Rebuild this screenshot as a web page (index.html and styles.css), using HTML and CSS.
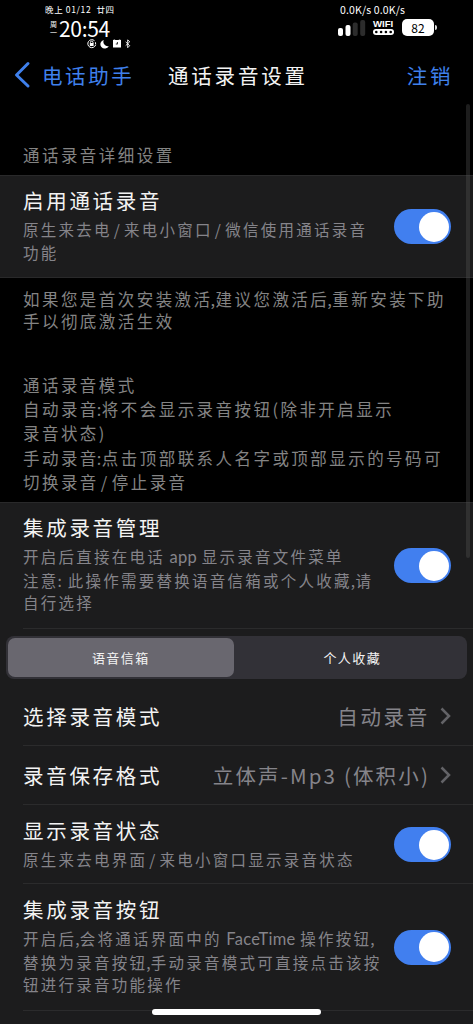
FILE: index.html
```html
<!DOCTYPE html>
<html lang="zh-CN">
<head>
<meta charset="utf-8">
<title>通话录音设置</title>
<link rel="stylesheet" href="styles.css">
</head>
<body>
<main class="screen">
  <header class="status">
    <div class="status-left">
      <div class="date">晚上 01/12&nbsp; 廿四</div>
      <div class="clock-row"><span class="week"><span>周</span><span>一</span></span><span class="clock">20:54</span></div>
      <svg class="status-icons" width="44" height="10" viewBox="0 0 44 10">
        <g fill="none" stroke="#fff" stroke-width="1"><path d="M7.5 1.7A4 4 0 1 0 8.6 6M8.4 3.2l.3 2.3"/><path d="M3.4 4.2V3.4a1.3 1.3 0 0 1 2.6 0v.8"/></g>
        <rect x="2.8" y="4" width="3.8" height="3" rx=".5" fill="#fff"/>
        <path d="M16.8.9a4.4 4.4 0 1 0 5 6.1A4.4 4.4 0 0 1 16.8.9Z" fill="#fff"/>
        <path d="M26 1.1 27.6.4 28.5 1h3l.9-.6L34 1.1v7.4H26Z" fill="#fff"/><path d="M30.4 5.2V3M30.4 5H28.8" stroke="#000" stroke-width=".8" fill="none"/>
        <path d="m38.7 2.9 4 3.8-2 2V.8l2 2-4 3.8" fill="none" stroke="#fff" stroke-width=".9"/>
      </svg>
    </div>
    <div class="status-right">
      <div class="speed">0.0K/s 0.0K/s</div>
      <div class="signals">
        <svg width="28" height="16" viewBox="0 0 28 16"><g fill="#fff"><rect x="0" y="8" width="5" height="8" rx="2"/><rect x="7.5" y="5" width="5" height="11" rx="2"/></g><g fill="#2c2c2c"><rect x="14.7" y="2.5" width="5" height="13.5" rx="2"/><rect x="22.2" y="0" width="5" height="16" rx="2"/></g></svg>
        <div class="wifi"><span>WIFI</span><svg width="21" height="6" viewBox="0 0 21 6"><rect width="21" height="6" rx="3" fill="#fff"/><g fill="#000"><circle cx="3.3" cy="3" r="1.3"/><circle cx="8.1" cy="3" r="1.3"/><circle cx="12.9" cy="3" r="1.3"/><circle cx="17.7" cy="3" r="1.3"/></g></svg></div>
        <div class="battery"><span class="level">82</span><span class="tip"></span></div>
      </div>
    </div>
  </header>

  <nav class="nav">
    <a class="back"><svg width="17" height="28" viewBox="0 0 17 28"><path d="M14 2.5 2.5 14 14 25" fill="none" stroke="#3f80ec" stroke-width="3" stroke-linecap="round" stroke-linejoin="round"/></svg><span>电话助手</span></a>
    <h1>通话录音设置</h1>
    <a class="logout">注销</a>
  </nav>

  <p class="note note-head"><span>通话录音详细设置</span></p>

  <section class="group first">
    <div class="row">
      <div class="copy"><h2>启用通话录音</h2><p><span>原生来去电<i>/</i>来电小窗口<i>/</i>微信使用通话录音</span><span>功能</span></p></div>
      <div class="toggle"></div>
    </div>
  </section>

  <p class="note note-foot"><span>如果您是首次安装激活<em>,</em>建议您激活后<em>,</em>重新安装下助</span><span>手以彻底激活生效</span></p>
  <p class="note note-mode"><span>通话录音模式</span><span>自动录音<em>:</em>将不会显示录音按钮(除非开启显示</span><span>录音状态)</span><span>手动录音<em>:</em>点击顶部联系人名字或顶部显示的号码可</span><span>切换录音<i>/</i>停止录音</span></p>

  <section class="group second">
    <div class="row manage">
      <div class="copy"><h2>集成录音管理</h2><p><span>开启后直接在电话<b> app </b>显示录音文件菜单</span><span>注意<em>:</em> 此操作需要替换语音信箱或个人收藏<em>,</em>请</span><span>自行选择</span></p></div>
      <div class="toggle"></div>
    </div>
    <div class="segment-wrap"><div class="segment"><span class="active">语音信箱</span><span>个人收藏</span></div></div>
    <div class="row link"><h2>选择录音模式</h2><span class="value">自动录音</span><svg class="chevron" width="11" height="18" viewBox="0 0 11 18"><path d="m1.5 1.5 7.5 7.5-7.5 7.5" fill="none" stroke="#636367" stroke-width="2.5"/></svg></div>
    <div class="row link"><h2>录音保存格式</h2><span class="value mixed">立体声-Mp3 (体积小)</span><svg class="chevron" width="11" height="18" viewBox="0 0 11 18"><path d="m1.5 1.5 7.5 7.5-7.5 7.5" fill="none" stroke="#636367" stroke-width="2.5"/></svg></div>
    <div class="row state">
      <div class="copy"><h2>显示录音状态</h2><p><span>原生来去电界面<i>/</i>来电小窗口显示录音状态</span></p></div>
      <div class="toggle"></div>
    </div>
    <div class="row button-row">
      <div class="copy"><h2>集成录音按钮</h2><p><span>开启后<em>,</em>会将通话界面中的<b> FaceTime </b>操作按钮<em>,</em></span><span>替换为录音按钮<em>,</em>手动录音模式可直接点击该按</span><span>钮进行录音功能操作</span></p></div>
      <div class="toggle"></div>
    </div>
  </section>
  <div class="scrollbar"></div>
  <div class="home"></div>
</main>
</body>
</html>
```

FILE: styles.css
```css
* { box-sizing: border-box; }
body { margin: 0; background: #000; }
.screen { position: relative; width: 473px; height: 1024px; overflow: hidden; background: #000; color: #f3f3f3; font-family: "Noto Sans CJK SC", sans-serif; font-weight: 400; }
h1, h2, p { margin: 0; font-weight: 400; }
i, em, b { font-style: normal; font-weight: inherit; }

.status { display: flex; justify-content: space-between; height: 50px; color: #fff; }
.status-left { padding: 3px 0 0 45px; }
.date { font-size: 8.5px; line-height: 12px; letter-spacing: .65px; white-space: nowrap; }
.clock-row { display: flex; align-items: center; height: 24px; margin-top: 1px; padding-left: 5px; }
.week { display: flex; flex-direction: column; width: 9px; font-size: 7px; line-height: 8px; }
.clock { font-size: 21px; line-height: 24px; letter-spacing: -.3px; }
.status-icons { display: block; margin: -1px 0 0 42px; }
.status-right { width: 133px; padding-top: 4px; }
.speed { font-size: 10.5px; line-height: 12px; letter-spacing: .15px; white-space: nowrap; }
.signals { display: flex; align-items: flex-start; padding-top: 3px; }
.signals > svg { margin-top: 1px; margin-left: -2px; }
.wifi { display: flex; flex-direction: column; width: 21px; margin-left: 7px; }
.wifi span { height: 10px; font: bold 9.6px/10px "Liberation Sans", sans-serif; white-space: nowrap; }
.battery { display: flex; align-items: center; margin-left: 8px; }
.level { width: 32px; height: 17px; border-radius: 5px; background: #fff; color: #000; font-size: 12px; line-height: 17px; text-align: center; }
.tip { width: 2px; height: 5px; margin-left: 1px; border-radius: 0 2px 2px 0; background: #ddd; }

.nav { display: grid; grid-template-columns: 168px 1fr auto; align-items: center; height: 50px; padding-right: 20px; font-size: 20.5px; line-height: 30px; letter-spacing: 2.6px; }
.nav h1 { font-size: 20.5px; letter-spacing: 2.8px; }
.back, .logout { color: #3f80ec; }
.back { display: flex; align-items: center; padding-left: 14px; gap: 11px; }

.note { padding-left: 23px; color: #848484; font-size: 16.5px; letter-spacing: 2.45px; }
.note span, .copy p span { display: block; white-space: nowrap; }
.note i, .copy i { margin: 0 2px; }
.note em { margin-right: -2px; margin-left: -2px; }
.copy em { margin-right: -2px; margin-left: -1px; }
.note-head { height: 75px; padding-top: 43px; line-height: 24px; }
.note-foot { height: 95px; padding-top: 10px; line-height: 22px; }
.note-mode { height: 129px; line-height: 24.2px; }

.group { background: #1c1c1d; border-top: 1px solid #29292a; }
.row { position: relative; display: flex; align-items: center; padding: 0 22px 0 23px; }
.first { height: 103px; border-bottom: 1px solid #29292a; }
.first .row { height: 101px; }
.copy { flex: 1; padding-bottom: 4px; }
.row h2 { font-size: 20.5px; line-height: 30px; letter-spacing: 2.7px; }
.copy h2 { margin-bottom: 3px; }
.copy p { color: #85848a; font-size: 15.5px; line-height: 22.8px; letter-spacing: 2.25px; }
.copy b { font-family: Lato, sans-serif; font-size: 16.5px; letter-spacing: .3px; }
.toggle { display: flex; justify-content: flex-end; flex: none; width: 57px; height: 35px; padding: 2.5px 2px; border-radius: 18px; background: #417fef; }
.toggle::after { content: ""; width: 30px; height: 30px; border-radius: 50%; background: #fff; }

.second { height: 522px; }
.manage { height: 126px; }
.manage .copy { padding-bottom: 6px; }
.manage .toggle { margin-bottom: 1px; }
.segment-wrap { height: 58px; padding: 7px 6px 8px; }
.segment { display: grid; grid-template-columns: 1fr 1fr; height: 43px; padding: 2px; border-radius: 8px; background: #323137; font-size: 13px; line-height: 39px; letter-spacing: 1.4px; text-align: center; }
.active { margin-right: 3px; border-radius: 7px; background: #69676f; }
.active + span { padding-left: 3px; }
.link { height: 59px; padding-bottom: 2px; }
.value { flex: 1; padding-right: 10px; color: #85848a; font-size: 20.5px; line-height: 30px; letter-spacing: 2.7px; text-align: right; white-space: nowrap; }
.mixed { letter-spacing: 2.15px; }
.state { height: 79px; }
.button-row { height: 127px; padding-bottom: 1px; }
.manage::after, .link::after, .state::after, .button-row::after { content: ""; position: absolute; right: 0; bottom: 0; left: 23px; height: 1px; background: #2b2b2c; }

.scrollbar { position: absolute; top: 104px; left: 466px; width: 4px; height: 454px; border-radius: 2px; background: rgba(90, 90, 90, .32); }
.home { position: absolute; top: 1009px; left: 152px; width: 169px; height: 6px; border-radius: 3px; background: #fff; }
```
